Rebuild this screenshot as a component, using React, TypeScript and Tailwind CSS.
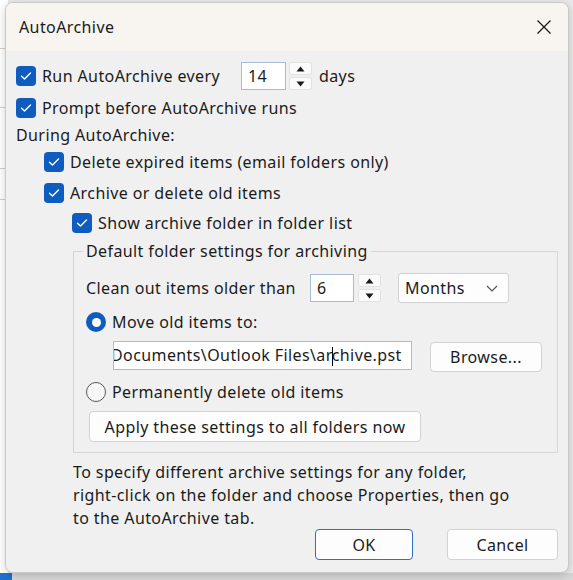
import React from "react";

const font = { fontFamily: '"Noto Sans", "Open Sans", sans-serif', letterSpacing: "0.4px" };

function Check({ checked = true }: { checked?: boolean }) {
  return (
    <span className="flex h-[20px] w-[20px] shrink-0 items-center justify-center rounded-[4px] bg-[#0f5cc0]">
      {checked && (
        <svg width="12" height="10" viewBox="0 0 12 10" fill="none">
          <path d="M1.5 5.2 L4.5 8 L10.5 2" stroke="white" strokeWidth="1.4" strokeLinecap="round" strokeLinejoin="round" />
        </svg>
      )}
    </span>
  );
}

function Radio({ selected }: { selected: boolean }) {
  return selected ? (
    <span className="flex h-[20px] w-[20px] shrink-0 items-center justify-center rounded-full bg-[#0f5cc0]">
      <span className="h-[9px] w-[9px] rounded-full bg-white" />
    </span>
  ) : (
    <span className="h-[20px] w-[20px] shrink-0 rounded-full border-[1.5px] border-[#5a5a5a] bg-[#f7f7f7]" />
  );
}

function Spinner() {
  return (
    <div className="flex h-full w-[23px] flex-col gap-[2px]">
      <div className="flex flex-1 items-center justify-center rounded-[2px] border border-[#e2e2e2] bg-[#fbfbfb]">
        <svg width="9" height="6" viewBox="0 0 9 6"><path d="M4.5 0.5 L8.5 5.5 L0.5 5.5 Z" fill="#1a1a1a" /></svg>
      </div>
      <div className="flex flex-1 items-center justify-center rounded-[2px] border border-[#e2e2e2] bg-[#fbfbfb]">
        <svg width="9" height="6" viewBox="0 0 9 6"><path d="M0.5 0.5 L8.5 0.5 L4.5 5.5 Z" fill="#1a1a1a" /></svg>
      </div>
    </div>
  );
}

function NumberBox({ value, w }: { value: string; w: string }) {
  return (
    <div className={`flex h-full items-center border-[1.5px] border-[#a9bcd6] bg-white pl-[6px] ${w}`}>
      {value}
    </div>
  );
}

function Button({ label, className }: { label: string; className: string }) {
  return (
    <div className={`flex items-center justify-center rounded-[4px] bg-[#fdfdfd] ${className}`}>
      {label}
    </div>
  );
}

export default function App() {
  return (
    <div className="relative h-[580px] w-[573px] overflow-hidden bg-[#e9e9e9] text-[16px] text-[#1b1b1b]" style={font}>
      {/* window behind the dialog */}
      <div className="absolute left-0 top-0 h-[573px] w-[8px] bg-white">
        <div className="mt-[48px] h-px bg-[#cfcfcf]" />
        <div className="mt-[58px] h-px bg-[#cfcfcf]" />
        <div className="mt-[60px] h-px bg-[#cfcfcf]" />
        <div className="mt-[30px] h-px bg-[#cfcfcf]" />
      </div>
      <div className="absolute bottom-0 left-0 h-[7px] w-full bg-[#d6d6d6]">
        <div className="h-full w-[12px] bg-[#1f6fd0]" />
      </div>

      <div className="absolute left-[5px] top-[2px] flex h-[571px] w-[564px] flex-col overflow-hidden rounded-[8px] border border-[#c9c9c9] bg-[#f0f0f0] shadow-[0_2px_8px_rgba(0,0,0,0.18)]">
        {/* title bar */}
        <div className="flex h-[48px] shrink-0 items-center justify-between bg-[#f8f5f0] pl-[13px] pr-[16px]">
          <span>AutoArchive</span>
          <svg width="16" height="16" viewBox="0 0 16 16">
            <path d="M1.5 1.5 L14.5 14.5 M14.5 1.5 L1.5 14.5" stroke="#1b1b1b" strokeWidth="1.3" />
          </svg>
        </div>

        <div className="flex flex-col px-[10px] pt-[11px]">
          <div className="flex h-[28px] items-center">
            <Check />
            <span className="ml-[6px] w-[199px]">Run AutoArchive every</span>
            <NumberBox value="14" w="w-[45px]" />
            <div className="ml-[3px] h-full"><Spinner /></div>
            <span className="ml-[7px]">days</span>
          </div>
          <div className="mt-[3px] flex h-[30px] items-center">
            <Check />
            <span className="ml-[6px]">Prompt before AutoArchive runs</span>
          </div>
          <div className="flex h-[24px] items-center">During AutoArchive:</div>
          <div className="ml-[28px] flex h-[30px] items-center">
            <Check />
            <span className="ml-[6px]">Delete expired items (email folders only)</span>
          </div>
          <div className="ml-[28px] flex h-[31px] items-center">
            <Check />
            <span className="ml-[6px]">Archive or delete old items</span>
          </div>
          <div className="ml-[56px] flex h-[30px] items-center">
            <Check />
            <span className="ml-[6px]">Show archive folder in folder list</span>
          </div>

          {/* archive settings group */}
          <fieldset className="ml-[57px] mt-[1px] h-[214px] border border-[#d6d6d6] pl-[12px] pr-[14px]">
            <legend className="ml-[-3px] px-[3px]">Default folder settings for archiving</legend>
            <div className="mt-[11px] flex h-[28px] items-center">
              <span className="w-[224px]">Clean out items older than</span>
              <NumberBox value="6" w="w-[44px]" />
              <div className="ml-[4px] h-full"><Spinner /></div>
              <div className="ml-[17px] flex h-[30px] w-[111px] items-center justify-between rounded-[3px] border border-[#d2d2d2] bg-[#fdfdfd] pl-[6px] pr-[10px]">
                <span>Months</span>
                <svg width="12" height="7" viewBox="0 0 12 7" fill="none">
                  <path d="M1 1 L6 6 L11 1" stroke="#555" strokeWidth="1.2" />
                </svg>
              </div>
            </div>
            <div className="mt-[5px] flex h-[30px] items-center">
              <Radio selected />
              <span className="ml-[6px]">Move old items to:</span>
            </div>
            <div className="mt-[3px] flex h-[30px] items-center">
              <div className="ml-[27px] flex h-[29px] w-[299px] items-center overflow-hidden border-[1.5px] border-[#a9bcd6] bg-white">
                <span className="ml-[-3px] whitespace-nowrap">
                  Documents\Outlook Files\ar
                  <span className="mx-[-1px] inline-block h-[19px] w-px bg-black align-middle" />
                  chive.pst
                </span>
              </div>
              <Button label="Browse..." className="ml-[18px] mt-[3px] h-[30px] w-[112px] border border-[#d2d2d2]" />
            </div>
            <div className="mt-[7px] flex h-[30px] items-center">
              <Radio selected={false} />
              <span className="ml-[6px]">Permanently delete old items</span>
            </div>
            <Button
              label="Apply these settings to all folders now"
              className="ml-[3px] mt-[4px] h-[31px] w-[332px] border border-[#d2d2d2]"
            />
          </fieldset>

          <p className="ml-[57px] mt-[8px] leading-[23px]">
            To specify different archive settings for any folder,
            <br />
            right-click on the folder and choose Properties, then go
            <br />
            to the AutoArchive tab.
          </p>

          <div className="mt-[-1px] flex justify-end">
            <Button label="OK" className="h-[31px] w-[98px] border-[1.5px] border-[#2f6fca]" />
            <Button label="Cancel" className="ml-[34px] h-[31px] w-[111px] border border-[#d2d2d2]" />
          </div>
        </div>
      </div>
    </div>
  );
}
